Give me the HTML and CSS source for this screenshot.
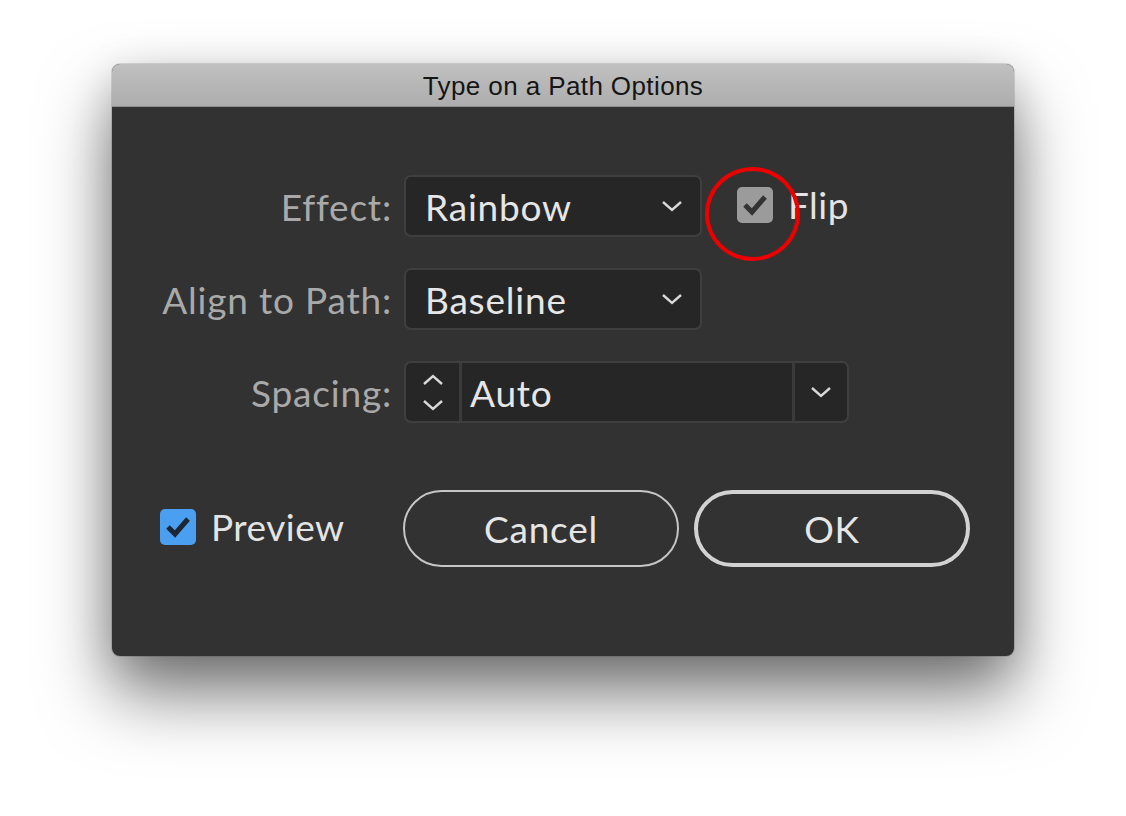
FILE: index.html
```html
<!DOCTYPE html>
<html>
<head>
<meta charset="utf-8">
<link rel="stylesheet" href="styles.css">
</head>
<body>
<div class="dialog">
  <div class="titlebar">Type on a Path Options</div>
  <div class="content">
    <div class="form">
      <div class="label">Effect:</div>
      <div class="control">
        <div class="select">
          <span class="value">Rainbow</span>
          <svg class="chev" width="22" height="12" viewBox="0 0 22 12"><path d="M2 2 L11 10 L20 2" fill="none" stroke="#d8d8d8" stroke-width="2.4"/></svg>
        </div>
        <div class="flip">
          <span class="cb gray">
            <svg width="28" height="24" viewBox="0 0 28 24"><path d="M4 12 L11 19 L24 4" fill="none" stroke="#333" stroke-width="5"/></svg>
          </span>
          <span class="cb-label">Flip</span>
          <span class="ring"></span>
        </div>
      </div>

      <div class="label">Align to Path:</div>
      <div class="control">
        <div class="select">
          <span class="value">Baseline</span>
          <svg class="chev" width="22" height="12" viewBox="0 0 22 12"><path d="M2 2 L11 10 L20 2" fill="none" stroke="#d8d8d8" stroke-width="2.4"/></svg>
        </div>
      </div>

      <div class="label">Spacing:</div>
      <div class="control">
        <div class="combo">
          <div class="stepper">
            <svg width="22" height="12" viewBox="0 0 22 12"><path d="M2 10 L11 2 L20 10" fill="none" stroke="#d8d8d8" stroke-width="2.4"/></svg>
            <svg width="22" height="12" viewBox="0 0 22 12"><path d="M2 2 L11 10 L20 2" fill="none" stroke="#d8d8d8" stroke-width="2.4"/></svg>
          </div>
          <div class="combo-value">Auto</div>
          <div class="combo-drop">
            <svg width="22" height="12" viewBox="0 0 22 12"><path d="M2 2 L11 10 L20 2" fill="none" stroke="#d8d8d8" stroke-width="2.4"/></svg>
          </div>
        </div>
      </div>
    </div>

    <div class="actions">
      <div class="preview">
        <span class="cb blue">
          <svg width="28" height="24" viewBox="0 0 28 24"><path d="M4 12 L11 19 L24 4" fill="none" stroke="#1d2633" stroke-width="5"/></svg>
        </span>
        <span class="cb-label">Preview</span>
      </div>
      <div class="buttons">
        <button class="btn">Cancel</button>
        <button class="btn default">OK</button>
      </div>
    </div>
  </div>
</div>
</body>
</html>
```

FILE: styles.css
```css
html, body {
  margin: 0;
  padding: 0;
  background: #ffffff;
  width: 1126px;
  height: 816px;
  overflow: hidden;
}

body {
  padding: 64px 0 0 112px;
  box-sizing: border-box;
  font-family: "Lato", "Liberation Sans", sans-serif;
}

.dialog {
  width: 902px;
  height: 592px;
  border-radius: 8px;
  background: #323232;
  box-shadow: 0 0 0 1px rgba(0, 0, 0, 0.12), 0 38px 70px rgba(0, 0, 0, 0.52), 0 10px 40px rgba(0, 0, 0, 0.15);
  display: flex;
  flex-direction: column;
  overflow: hidden;
}

.titlebar {
  height: 43px;
  flex: none;
  background: linear-gradient(#c0c0c0, #adadad);
  border-bottom: 1px solid #8e8e8e;
  box-sizing: border-box;
  display: flex;
  align-items: center;
  justify-content: center;
  font-family: "Liberation Sans", "Lato", sans-serif;
  font-size: 26px;
  color: #151515;
  letter-spacing: 0.4px;
  padding-top: 3px;
}

.content {
  flex: 1;
  padding-top: 68px;
}

.form {
  display: grid;
  grid-template-columns: 280px 1fr;
  column-gap: 12px;
  row-gap: 31px;
  align-items: center;
}

.label {
  text-align: right;
  font-size: 37px;
  letter-spacing: 0.8px;
  color: #a9a9a9;
}

.control {
  display: flex;
  align-items: center;
}

.select {
  width: 298px;
  height: 62px;
  box-sizing: border-box;
  border: 2px solid #3f3f3f;
  border-radius: 7px;
  background: #262626;
  display: flex;
  align-items: center;
  justify-content: space-between;
  padding: 0 17px 0 19px;
}

.value, .combo-value {
  font-size: 37px;
  letter-spacing: 0.8px;
  color: #e6e6e6;
}

.chev {
  display: block;
}

.flip {
  position: relative;
  display: flex;
  align-items: center;
  margin-left: 35px;
  margin-top: -3px;
}

.cb {
  width: 36px;
  height: 36px;
  border-radius: 5px;
  display: flex;
  align-items: center;
  justify-content: center;
  flex: none;
}

.cb svg {
  display: block;
}

.cb.gray {
  background: #9b9b9b;
}

.cb.blue {
  background: #4b9ff0;
}

.cb-label {
  font-size: 37px;
  letter-spacing: 0.5px;
  color: #e4e4e4;
  margin-left: 15px;
}

.ring {
  position: absolute;
  left: -32px;
  top: -15px;
  width: 95px;
  height: 94px;
  box-sizing: border-box;
  border: 4px solid #ec0000;
  border-radius: 50%;
}

.combo {
  width: 445px;
  height: 62px;
  box-sizing: border-box;
  border: 2px solid #3f3f3f;
  border-radius: 7px;
  background: #262626;
  display: flex;
  overflow: hidden;
}

.stepper {
  width: 53px;
  flex: none;
  border-right: 3px solid #3a3a3a;
  display: flex;
  flex-direction: column;
  align-items: center;
  justify-content: center;
  gap: 13px;
}

.stepper svg, .combo-drop svg {
  display: block;
}

.combo-value {
  flex: 1;
  display: flex;
  align-items: center;
  padding-left: 8px;
}

.combo-drop {
  width: 52px;
  flex: none;
  border-left: 3px solid #3a3a3a;
  display: flex;
  align-items: center;
  justify-content: center;
}

.actions {
  display: flex;
  align-items: center;
  margin-top: 67px;
  padding-left: 48px;
}

.preview {
  display: flex;
  align-items: center;
  width: 243px;
  margin-top: -4px;
}

.buttons {
  display: flex;
  gap: 15px;
}

.btn {
  width: 276px;
  height: 77px;
  box-sizing: border-box;
  border: 2px solid #c6c6c6;
  border-radius: 39px;
  background: transparent;
  color: #e6e6e6;
  font-family: "Lato", "Liberation Sans", sans-serif;
  font-size: 37px;
  letter-spacing: 0.8px;
  padding: 0;
}

.btn.default {
  border: 4px solid #d2d2d2;
}
```
